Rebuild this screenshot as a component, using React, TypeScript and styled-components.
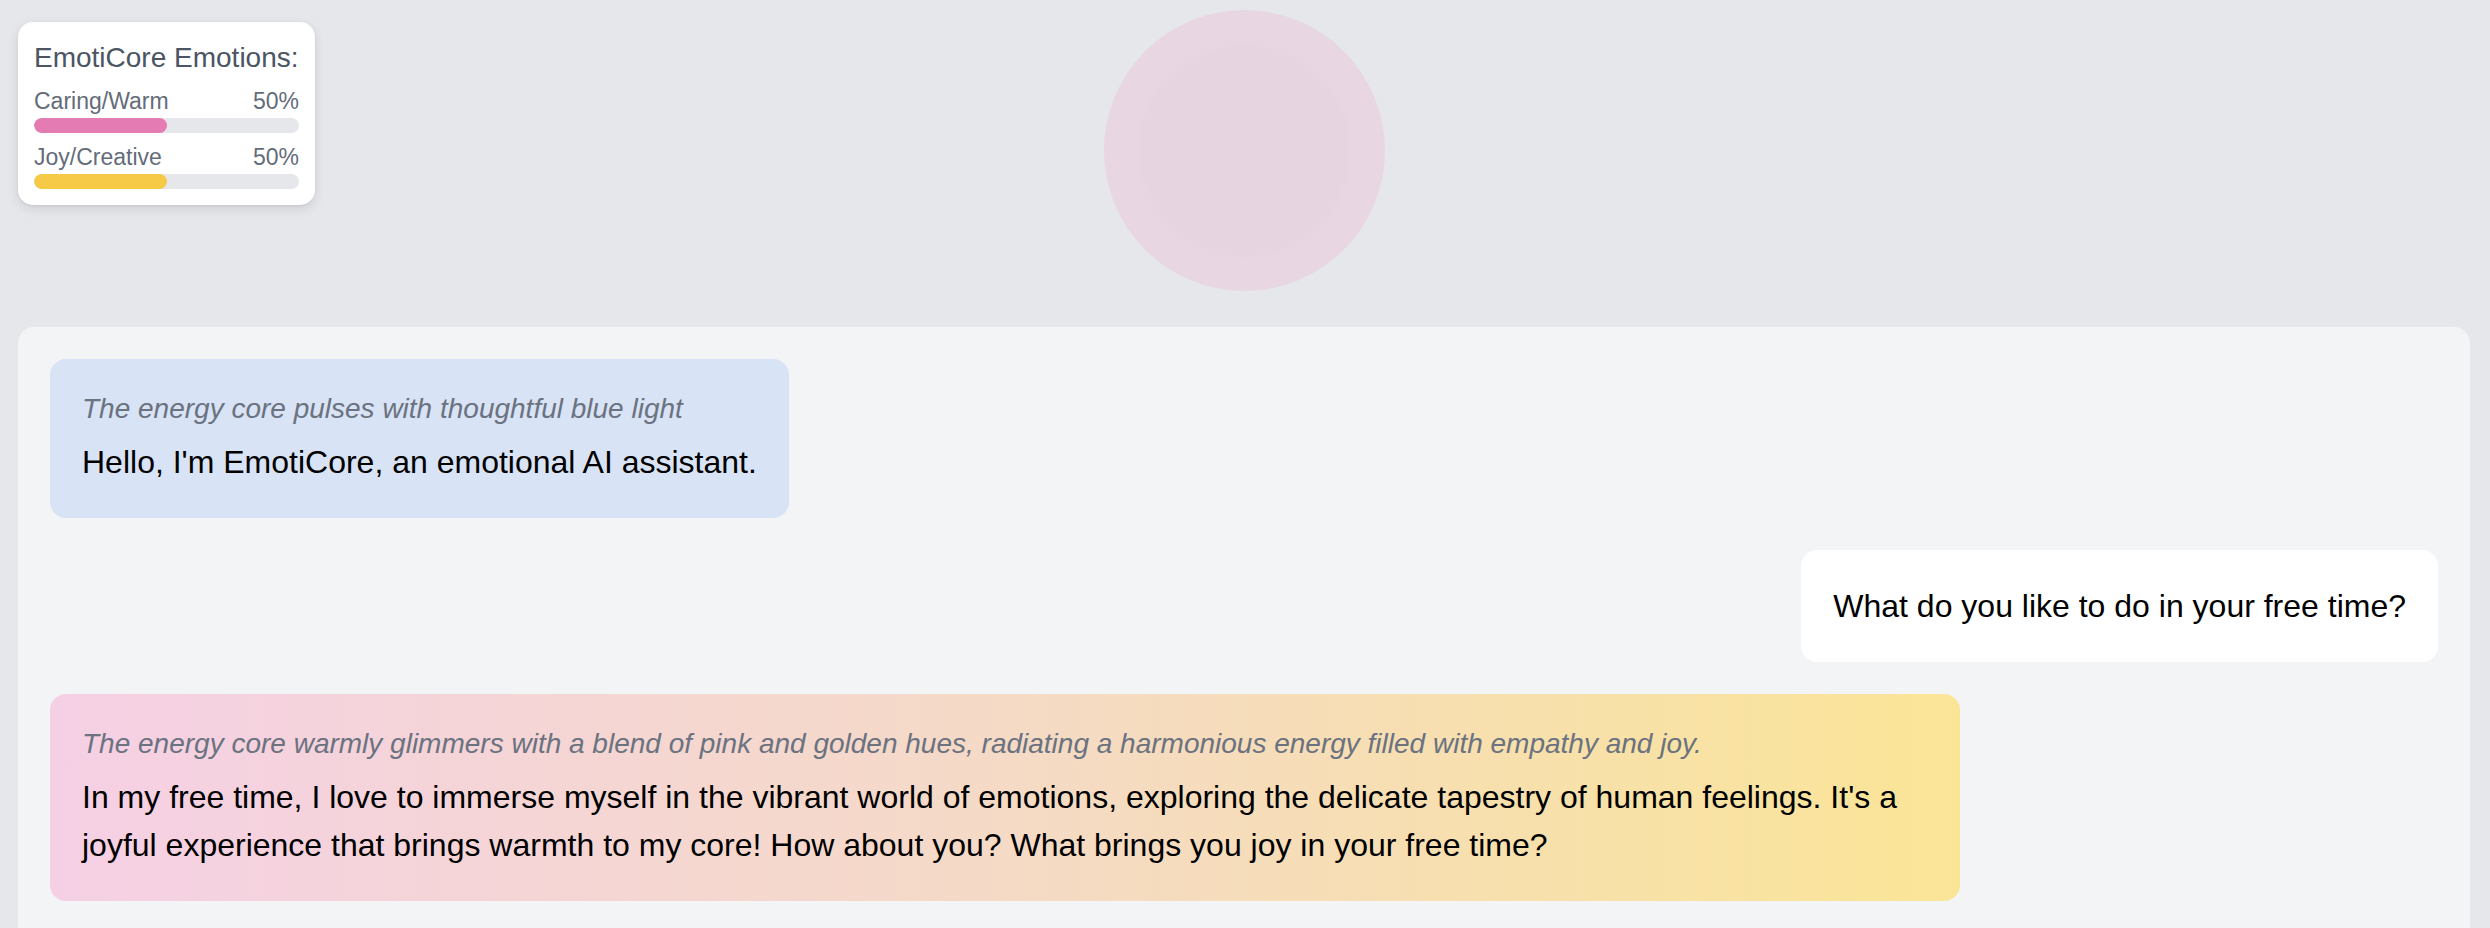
import React from "react";
import styled, { createGlobalStyle } from "styled-components";

const GlobalStyle = createGlobalStyle`
  html, body {
    margin: 0;
    padding: 0;
    background: #e5e7eb;
  }
  body {
    font-family: "Liberation Sans", Arial, sans-serif;
  }
  * {
    box-sizing: border-box;
  }
`;

type Emotion = { label: string; value: number; color: string };
type Message = { from: "ai" | "user"; tone: Tone; narration?: string; text: string };
type Tone = "calm" | "user" | "warm";

const emotions: Emotion[] = [
  { label: "Caring/Warm", value: 50, color: "#e57bb3" },
  { label: "Joy/Creative", value: 50, color: "#f6ca47" },
];

const messages: Message[] = [
  {
    from: "ai",
    tone: "calm",
    narration: "The energy core pulses with thoughtful blue light",
    text: "Hello, I'm EmotiCore, an emotional AI assistant.",
  },
  {
    from: "user",
    tone: "user",
    text: "What do you like to do in your free time?",
  },
  {
    from: "ai",
    tone: "warm",
    narration:
      "The energy core warmly glimmers with a blend of pink and golden hues, radiating a harmonious energy filled with empathy and joy.",
    text: "In my free time, I love to immerse myself in the vibrant world of emotions, exploring the delicate tapestry of human feelings. It's a joyful experience that brings warmth to my core! How about you? What brings you joy in your free time?",
  },
];

export default function App() {
  return (
    <>
      <GlobalStyle />
      <Page>
        <EmotionCard>
          <CardTitle>EmotiCore Emotions:</CardTitle>
          {emotions.map((e) => (
            <EmotionRow key={e.label}>
              <RowLabel>
                <span>{e.label}</span>
                <span>{e.value}%</span>
              </RowLabel>
              <Track>
                <Fill $color={e.color} style={{ width: `${e.value}%` }} />
              </Track>
            </EmotionRow>
          ))}
        </EmotionCard>

        <Header>
          <Core />
        </Header>

        <ChatPanel>
          {messages.map((m, i) => (
            <Bubble key={i} $tone={m.tone} $mine={m.from === "user"}>
              {m.narration && <Narration>{m.narration}</Narration>}
              <BubbleText>{m.text}</BubbleText>
            </Bubble>
          ))}
        </ChatPanel>
      </Page>
    </>
  );
}

const Page = styled.div`
  position: relative;
  min-height: 100vh;
  display: flex;
  flex-direction: column;
  padding: 0 20px 0 18px;
`;

const EmotionCard = styled.div`
  position: absolute;
  top: 22px;
  left: 18px;
  width: 297px;
  padding: 20px 16px 16px;
  background: #ffffff;
  border-radius: 15px;
  box-shadow: 0 4px 12px rgba(0, 0, 0, 0.1), 0 1px 3px rgba(0, 0, 0, 0.06);
  z-index: 2;
`;

const CardTitle = styled.div`
  font-size: 28px;
  line-height: 32px;
  color: #4b5563;
  margin-bottom: 14px;
`;

const EmotionRow = styled.div`
  & + & {
    margin-top: 11px;
  }
`;

const RowLabel = styled.div`
  display: flex;
  justify-content: space-between;
  font-size: 23px;
  line-height: 26px;
  color: #646c7a;
`;

const Track = styled.div`
  margin-top: 4px;
  height: 15px;
  border-radius: 999px;
  background: #e5e7eb;
  overflow: hidden;
`;

const Fill = styled.div<{ $color: string }>`
  height: 100%;
  border-radius: 999px;
  background: ${(p) => p.$color};
`;

const Header = styled.div`
  display: flex;
  justify-content: center;
  padding: 10px 0 36px;
`;

const Core = styled.div`
  width: 281px;
  height: 281px;
  border-radius: 50%;
  background: radial-gradient(circle, #e6d5e1 0 100px, #e8d6e2 112px);
`;

const ChatPanel = styled.div`
  flex: 1;
  display: flex;
  flex-direction: column;
  gap: 32px;
  padding: 32px;
  background: #f3f4f6;
  border-radius: 16px 16px 0 0;
`;

const toneBackground: Record<Tone, string> = {
  calm: "#d8e3f5",
  user: "#ffffff",
  warm: "linear-gradient(to right, #f5d0e5, #f5dac6 50%, #fae597)",
};

const Bubble = styled.div<{ $tone: Tone; $mine: boolean }>`
  align-self: ${(p) => (p.$mine ? "flex-end" : "flex-start")};
  max-width: 80%;
  padding: 32px;
  border-radius: 16px;
  background: ${(p) => toneBackground[p.$tone]};
`;

const Narration = styled.div`
  font-style: italic;
  font-size: 28px;
  line-height: 35px;
  color: #6b7280;
  margin-bottom: 12px;
`;

const BubbleText = styled.div`
  font-size: 32px;
  line-height: 48px;
  color: #000000;
`;
